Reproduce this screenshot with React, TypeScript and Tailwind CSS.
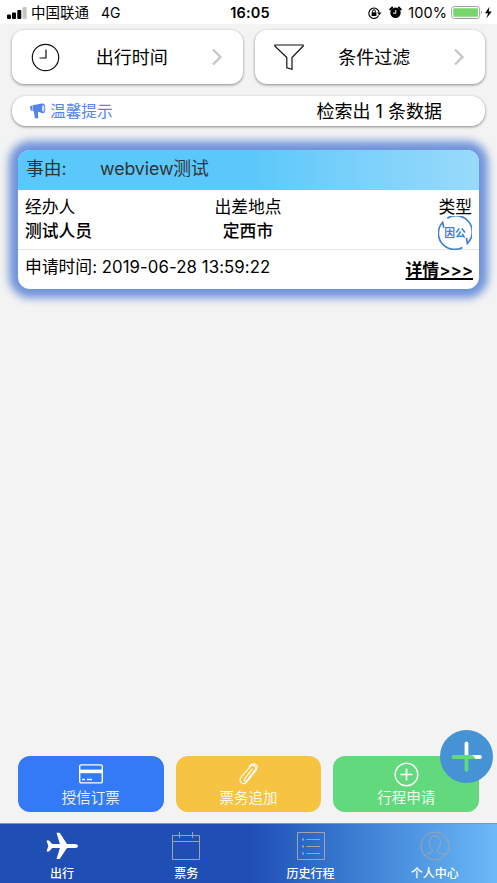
import type { ReactNode } from "react";

const FilterButton = ({ icon, label }: { icon: ReactNode; label: string }) => (
  <button className="flex h-[54px] flex-1 items-center rounded-[12px] bg-white pl-[19px] pr-[20px] shadow-[0_1px_3px_rgba(0,0,0,0.45)]">
    <span className="w-[30px]">{icon}</span>
    <span className="flex-1 pr-[8px] pt-[2px] text-center text-[18px] leading-[24px]">{label}</span>
    <svg width="12" height="18" viewBox="0 0 12 18" fill="none" stroke="#c7c7cc" strokeWidth="2.4">
      <path d="M2 1.5 9.5 9 2 16.5" />
    </svg>
  </button>
);

const StatusBar = () => (
  <header className="grid h-[24px] shrink-0 grid-cols-[1fr_auto_1fr] items-center bg-white pl-[7px] pr-[5px] text-[14.5px] leading-[24px]">
    <div className="flex items-center">
      <svg width="20" height="12" viewBox="0 0 20 12">
        <rect x="0" y="7.5" width="4" height="4.5" rx="1" />
        <rect x="5" y="5.5" width="4" height="6.5" rx="1" />
        <rect x="10.3" y="3" width="4" height="9" rx="1" />
        <rect x="15.6" y="0" width="4" height="12" rx="1" fill="#c4c4c4" />
      </svg>
      <span className="ml-[4px] pt-px">中国联通</span>
      <span className="ml-[12px] pt-px text-[14px]">4G</span>
    </div>
    <span className="pl-px pt-px font-semibold tracking-[0.2px]">16:05</span>
    <div className="flex items-center justify-end">
      <svg width="14" height="12" viewBox="0 0 14 12" fill="none" stroke="#000">
        <path d="M10.7 8.6A5.2 5.2 0 1 1 11.2 5.5" strokeWidth="1.1" />
        <path d="M9 5.5h4.6L11.3 8.3z" fill="#000" stroke="none" />
        <rect x="3.6" y="5.3" width="4.8" height="3.7" fill="#000" stroke="none" />
        <path d="M4.6 5.5V4.2a1.4 1.4 0 0 1 2.8 0v1.3" />
      </svg>
      <svg className="ml-[7px]" width="13" height="13" viewBox="0 0 13 13" fill="none">
        <path d="M1.2 3.5 3.2 1.5M9.8 1.5 11.8 3.5" stroke="#000" strokeWidth="1.8" strokeLinecap="round" />
        <circle cx="6.5" cy="6.8" r="5.2" fill="#000" />
        <path d="M6.8 4v3.2H4" stroke="#fff" />
      </svg>
      <span className="ml-[6px] pt-px tracking-[0.1px]">100%</span>
      <svg className="ml-[4px]" width="41" height="14" viewBox="0 0 41 14">
        <rect x="0.6" y="0.5" width="28" height="12" rx="2.8" fill="#fff" stroke="#a2a2a2" />
        <rect x="2.3" y="2.2" width="24.6" height="8.6" rx="1" fill="#74d66c" />
        <path d="M30 4.5q2 2 0 4z" fill="#a2a2a2" />
        <path d="m38.5.8-4.5 6.5h3l-1.5 4.9 5.3-6.7h-3.1z" />
      </svg>
    </div>
  </header>
);

const TripCard = () => (
  <section className="mx-[18px] mt-[24px] h-[139px] rounded-[12px] bg-white shadow-[0_0_9px_9px_#7093da]">
    <div className="flex h-[40px] items-center rounded-t-[12px] bg-linear-to-r from-[#5ac8fa] from-50% to-[#98dafb] pb-px pl-[8px] text-[17.8px] text-[#333]">
      <span className="w-[74px]">事由:</span>
      <span className="tracking-[-0.1px]">webview测试</span>
    </div>
    <div className="grid h-[60px] grid-cols-[1fr_auto_1fr] border-b border-[#e6e6e6] pl-[7px] pr-[7px] pt-[5px] text-[16.8px] leading-[24px]">
      <div>
        <p>经办人</p>
        <p className="font-medium">测试人员</p>
      </div>
      <div className="-ml-px text-center">
        <p>出差地点</p>
        <p className="font-medium">定西市</p>
      </div>
      <div className="flex flex-col items-end">
        <p>类型</p>
        <svg className="-mt-[3px] shrink-0" width="34" height="34" viewBox="0 0 34 34" fill="none" stroke="#4480cb" strokeWidth="1.7">
          <path d="M9.3 2.2A16.2 16.2 0 0 1 29.4 27.4l-1-5.6M24.4 31.4A16.2 16.2 0 0 1 4.6 6.3l1.2 5.4" />
          <text x="17" y="21" textAnchor="middle" fontSize="10.8" fontWeight="600" fill="#4480cb" stroke="none">因公</text>
        </svg>
      </div>
    </div>
    <div className="flex justify-between pl-[7px] pr-[6px] text-[16.8px] leading-[24px]">
      <span className="pt-[5px]">
        申请时间: <span className="tracking-[0.08px]">2019-06-28 13:59:22</span>
      </span>
      <a className="pt-[8px] font-semibold underline decoration-[1.5px] underline-offset-[2px]">详情&gt;&gt;&gt;</a>
    </div>
  </section>
);

const ActionButton = ({ color, icon, label }: { color: string; icon: ReactNode; label: string }) => (
  <button className={`flex h-[56px] flex-1 flex-col items-center rounded-[12px] pt-[5px] text-[14.5px] leading-[20px] text-white/90 ${color}`}>
    <span className="flex h-[26px] items-center">{icon}</span>
    <span className="mt-px">{label}</span>
  </button>
);

const TabItem = ({ icon, label }: { icon: ReactNode; label: string }) => (
  <a className="flex flex-1 flex-col items-center pt-[6px] text-[12px] font-medium leading-[16px] text-white">
    <span className="flex h-[32px] items-center">{icon}</span>
    <span className="mt-[4px]">{label}</span>
  </a>
);

const App = () => {
  return (
    <div className="relative flex h-[883px] w-[497px] flex-col bg-[#f3f3f3] font-['Inter','Noto_Sans_CJK_SC',sans-serif] text-black">
      <StatusBar />

      <div className="flex gap-[12px] px-[12px] pt-[6px]">
        <FilterButton
          label="出行时间"
          icon={
            <svg width="29" height="29" viewBox="0 0 29 29" fill="none" stroke="#111" strokeWidth="1.2">
              <circle cx="14.5" cy="14.5" r="13.2" />
              <path d="M15 6.5V15H8.5" />
            </svg>
          }
        />
        <FilterButton
          label="条件过滤"
          icon={
            <svg width="30" height="28" viewBox="0 0 30 28" fill="none" stroke="#111" strokeWidth="1.2">
              <path d="M.8 2h28.4v1L18 14.5v11.8l-5.2-1.5V14.5L.8 3z" />
            </svg>
          }
        />
      </div>

      <div className="mx-[12px] mt-[12px] flex h-[30px] items-center justify-between rounded-[14px] bg-white pl-[18px] pr-[43px] shadow-[0_1px_3px_rgba(0,0,0,0.45)]">
        <span className="flex items-center text-[15.7px] text-[#5484e8]">
          <svg className="mr-[4px]" width="16" height="16" viewBox="0 0 16 16" fill="#5484e8">
            <path d="M0 3.2 2.2 2.4v5.4L.7 7.4z" />
            <path d="M2.6 2.2 12 .6v9.4L8 8.8l.2 6.4H4.9L3.8 8.2l-1.2-.3z" />
            <ellipse cx="12.8" cy="5.4" rx="2.5" ry="4.8" />
            <ellipse cx="13.2" cy="5.4" rx="1.2" ry="3.2" fill="#dce6fb" />
          </svg>
          <span className="pt-[2px]">温馨提示</span>
        </span>
        <span className="pt-px text-[18px]">检索出 1 条数据</span>
      </div>

      <TripCard />

      <div className="mt-auto flex gap-[12px] px-[18px] pb-[11px]">
        <ActionButton
          color="bg-[#347af6]"
          label="授信订票"
          icon={
            <svg width="24" height="20" viewBox="0 0 24 20" fill="none" stroke="#fff" strokeWidth="1.4">
              <rect x=".7" y=".9" width="22.6" height="18" rx="1.5" />
              <path d="M.7 7.4h22.6" strokeWidth="3.6" />
              <path d="M3 15.5h3M8 15.5h5" />
            </svg>
          }
        />
        <ActionButton
          color="bg-[#f6c342]"
          label="票务追加"
          icon={
            <svg width="22" height="22" viewBox="0 0 22 22" fill="none" stroke="#fff" strokeWidth="1.1" strokeLinecap="round">
              <path d="m14.2 6-7.5 9.8c-1.2 1.9.9 3.3 2.3 1.6l8-10.5c2.3-3.6-2.1-6.6-4.8-3.2L3.1 14.2c-3.2 4.9 2.5 8.8 6 4.5L18.3 7c3.4-4.9-3-8.9-7.2-3.5" />
            </svg>
          }
        />
        <ActionButton
          color="bg-[#63d97d]"
          label="行程申请"
          icon={
            <svg width="25" height="25" viewBox="0 0 25 25" fill="none" stroke="#fff" strokeWidth="1.4">
              <circle cx="12.5" cy="12.5" r="11.3" />
              <path d="M12.5 6.5v12M6.5 12.5h12" strokeWidth="1.7" />
            </svg>
          }
        />
      </div>

      <button className="absolute left-[440px] top-[730px] h-[53px] w-[53px] rounded-full bg-[#4592d5]">
        <svg width="53" height="53" viewBox="0 0 53 53" fill="none" strokeWidth="3.8" strokeLinecap="round">
          <path d="M26.5 13.5V26M27 27h13" stroke="#fff" />
          <path d="M13.5 27h13v12.8" stroke="#63d97d" />
          <path d="M25 25.1h5.5c2.5 0 4 1.6 5 3.8h-9z" fill="#63d97d" />
        </svg>
      </button>

      <nav className="flex h-[60px] shrink-0 border-t border-[#7796c8] bg-linear-to-r from-[#1f4eb5] from-50% to-[#6bbaf8]">
        <TabItem
          label="出行"
          icon={
            <svg width="32" height="28" viewBox="0 0 32 28" fill="#fff">
              <path d="M10.5.8h3.2L21 11.9h7.5c4.7.2 4.7 4 0 4.2H21l-7.3 11h-3.2l3.4-11H6.2L3 19.5H.5L2.3 14 .5 8.5H3l3.2 3.4h7.7z" />
            </svg>
          }
        />
        <TabItem
          label="票务"
          icon={
            <svg width="28" height="28" viewBox="0 0 28 28" fill="none" stroke="#a0a4ad">
              <path d="M.5 3.5h27v24H.5zM.5 9.5h27M7.5 0v6M20.5 0v6" />
            </svg>
          }
        />
        <TabItem
          label="历史行程"
          icon={
            <svg width="28" height="28" viewBox="0 0 28 28" fill="none" stroke="#a0a4ad">
              <path d="M.5.5h27v27H.5zM9.5 7.5H23M9.5 14.5H23M9.5 21.5H23" />
              <path d="M5 7.5h2M5 14.5h2M5 21.5h2" strokeWidth="2" />
            </svg>
          }
        />
        <TabItem
          label="个人中心"
          icon={
            <svg width="30" height="30" viewBox="0 0 30 30" fill="none" stroke="#a0a4ad">
              <circle cx="15" cy="15" r="14" />
              <path d="M4.5 24.5c2-2 7.2-2 7.7-4.2.2-1.7-.6-2.2-1.3-3.3-1-1.5-1.4-4-1.4-6.2 0-8 11-8 11 0 0 2.2-.4 4.7-1.4 6.2-.7 1.1-1.5 1.6-1.3 3.3.5 2.2 5.7 2.2 7.7 4.2" />
            </svg>
          }
        />
      </nav>
    </div>
  );
};

export default App;
